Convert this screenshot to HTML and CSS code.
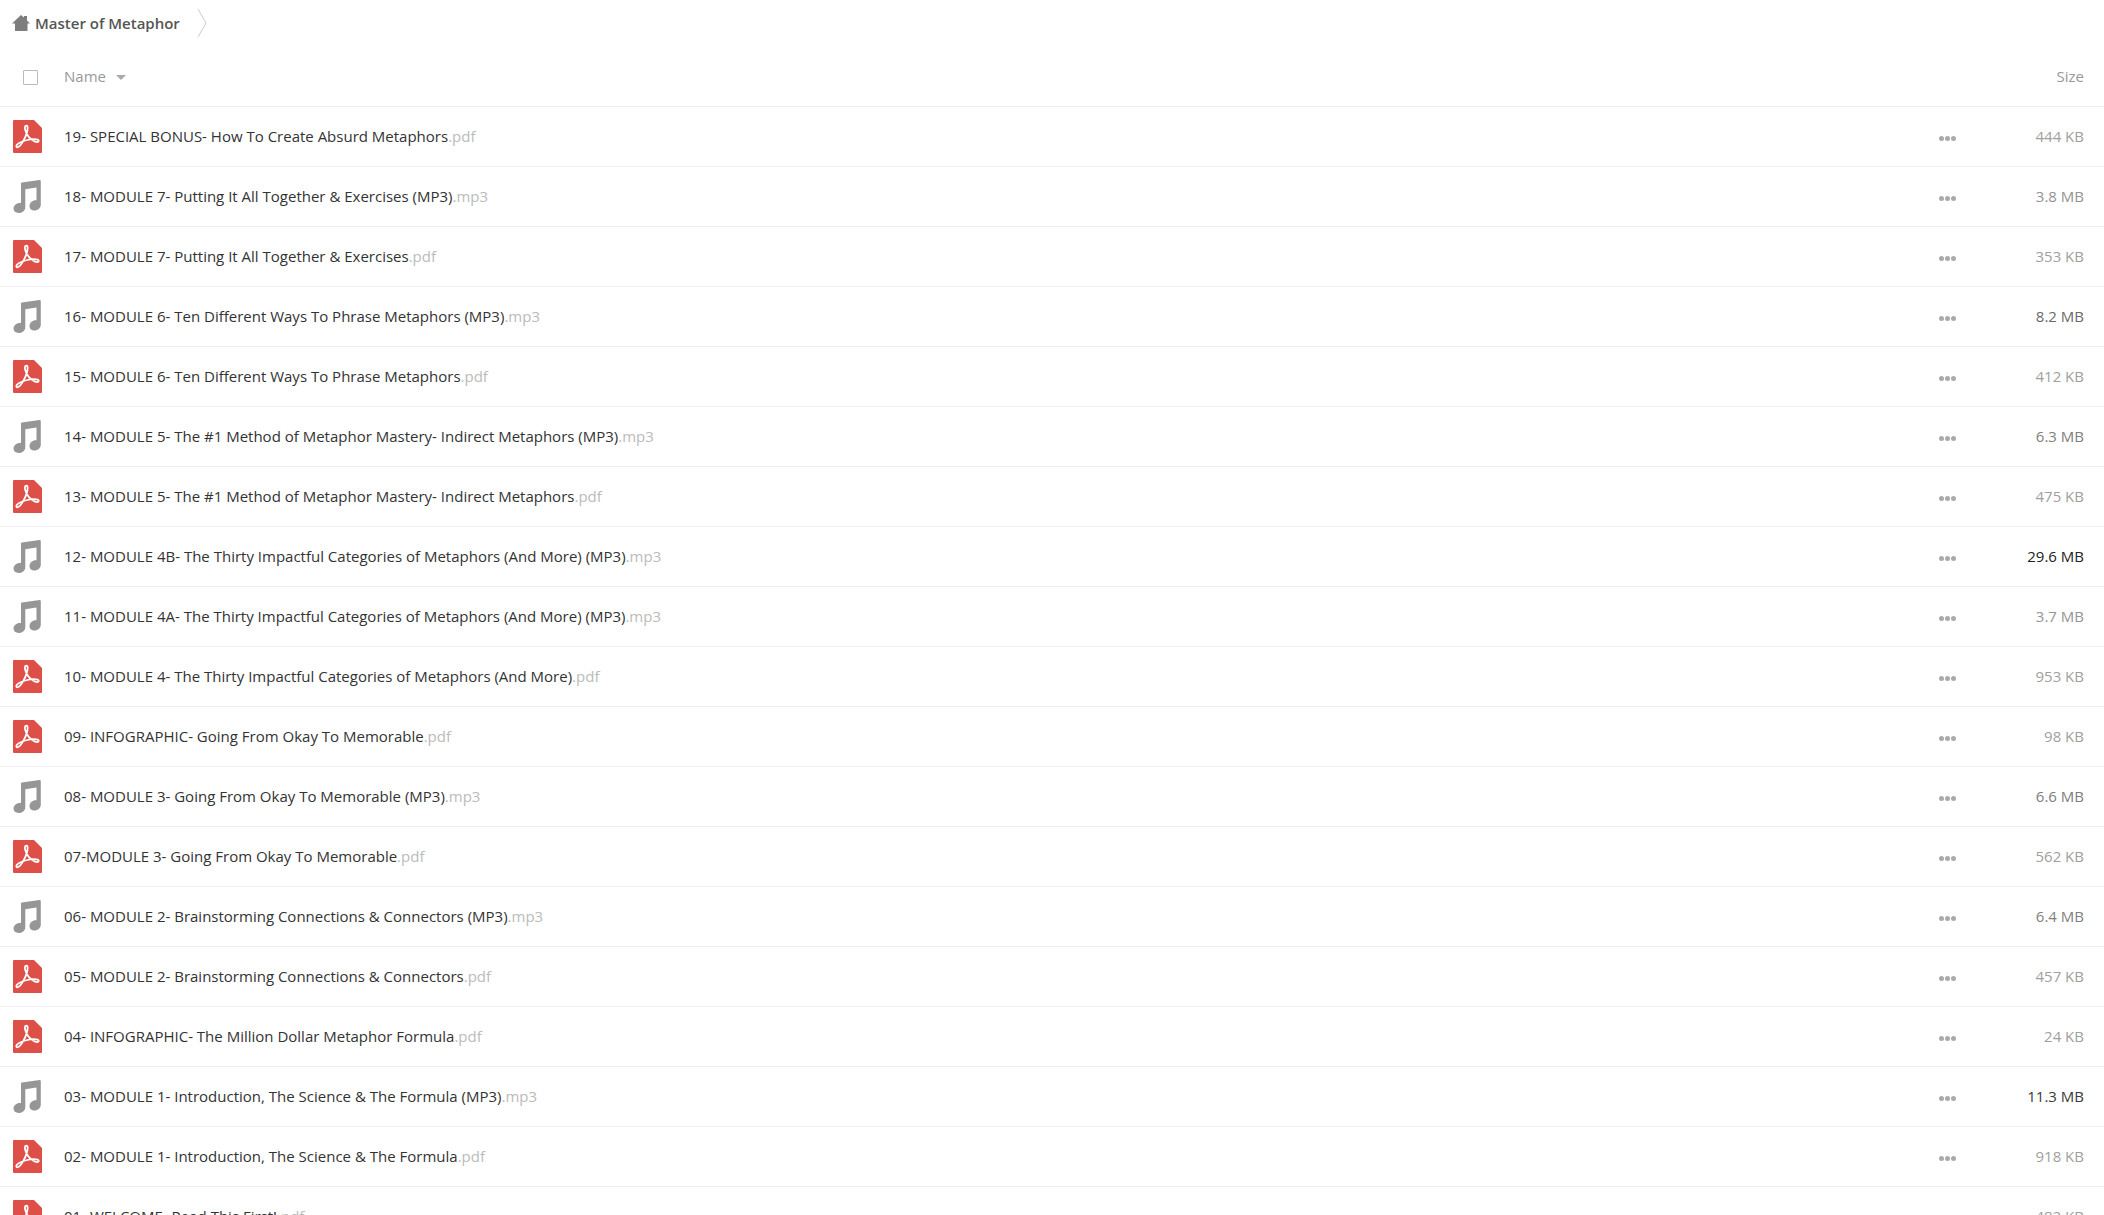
FILE: index.html
```html
<!DOCTYPE html>
<html lang="en">
<head>
    <meta charset="UTF-8">
    <meta name="viewport" content="width=device-width, initial-scale=1.0">
    <title>Master of Metaphor</title>
    <link rel="stylesheet" href="styles.css">
</head>
<body>
    <svg class="sprite" aria-hidden="true">
        <symbol id="icon-pdf" viewBox="0 0 29 33">
            <path fill="#dd4f47" d="M1 0H21L29 8V32a1 1 0 0 1-1 1H1a1 1 0 0 1-1-1V1a1 1 0 0 1 1-1z"/>
            <path fill="none" stroke="#fff" stroke-width="1.8" stroke-linejoin="round" d="M13.400 5.600c-1.900 0-1.700 2.600-1.100 4.600 1.100 3.900 4.300 8.100 7.700 10.300 1.600 1.100 3.500 1.800 4.800 1.400 1.300-.4 1.200-1.900-.2-2.300-2.800-.7-8.300-.1-12.200.9-3.300.9-6.500 2.200-8.200 4-1.300 1.300-1.100 2.800.2 2.800 2 0 4.600-3.800 6.700-7.900 1.800-3.500 3.400-8.500 3.500-11 .1-1.700-.2-2.800-1.200-2.800z"/>
        </symbol>
        <symbol id="icon-audio" viewBox="0 0 28 33">
            <path fill="#969696" d="M7.500 3.500Q7.500 2.600 8.500 2.500L26 0Q27.300 0 27.300 1.200V24.500C27.300 28 24.500 30.500 20.800 30.500C17.800 30.500 16 28.900 16 26.300C16 22.500 19.500 19.800 23 20.300V7.500L11.800 9.200V27C11.800 30.500 9 33 5.200 33C2 33 0 31.300 0 28.600C0 25 3.500 22.400 7.500 23z"/>
        </symbol>
    </svg>

    <nav class="breadcrumb">
        <a class="crumb" href="#">
            <svg class="home" viewBox="0 0 18 16" aria-hidden="true">
                <path fill="#7d7d7d" d="M9 0L12 2.600V1H15V5.400L18 8.500H15.500V16H3V8.500H0z"/>
            </svg>
            Master of Metaphor
        </a>
        <svg class="divider" viewBox="0 0 10 28" aria-hidden="true">
            <path fill="none" stroke="#ccc" d="M1 0L9 14L1 28"/>
        </svg>
    </nav>

    <table class="files">
        <thead>
            <tr>
                <th class="select"><input type="checkbox" class="select-all" aria-label="Select all"></th>
                <th class="name"><button type="button" class="sort">Name <span class="arrow"></span></button></th>
                <th class="actions"></th>
                <th class="size"><button type="button" class="sort">Size</button></th>
            </tr>
        </thead>
        <tbody id="fileList"></tbody>
    </table>

    <script src="script.js"></script>
</body>
</html>
```
FILE: styles.css
```css
* {
    box-sizing: border-box;
}

body {
    margin: 0;
    background-color: #fff;
    color: #333;
    font-family: "Open Sans", sans-serif;
    font-size: 15px;
    line-height: 20px;
}

a {
    color: inherit;
    text-decoration: none;
}

button {
    padding: 0;
    border: none;
    background: none;
    color: inherit;
    font: inherit;
    cursor: pointer;
}

.sprite {
    display: none;
}

.breadcrumb {
    display: flex;
    align-items: center;
    gap: 17px;
    height: 45px;
    padding-left: 12px;
}

.crumb {
    display: flex;
    align-items: center;
    gap: 5px;
    color: #555;
    font-weight: 600;
}

.home {
    width: 18px;
    height: 16px;
}

.divider {
    width: 10px;
    height: 28px;
}

.files {
    width: 100%;
    border-collapse: separate;
    border-spacing: 0;
    table-layout: fixed;
}

th,
td {
    height: 60px;
    padding: 0 0 2px;
    border-bottom: 1px solid #eee;
    text-align: left;
    vertical-align: middle;
}

th {
    height: 62px;
    padding-bottom: 0;
    color: #999;
    font-weight: 400;
}

.select {
    width: 64px;
    padding: 0 0 0 13px;
}

th.select {
    padding-left: 23px;
}

.select-all {
    display: block;
    width: 15px;
    height: 15px;
    margin: 3px 0 0;
    border: 1px solid #bbb;
    border-radius: 1px;
    appearance: none;
}

.select-all:checked {
    background-color: #999;
}

.arrow {
    display: inline-block;
    margin-left: 6px;
    border: 5px solid transparent;
    border-top-color: #aaa;
    border-bottom: none;
    vertical-align: middle;
}

.file-icon {
    display: block;
    width: 29px;
    height: 33px;
}

.ext {
    color: #bbb;
}

.actions {
    width: 81px;
}

.more {
    display: flex;
    gap: 1px;
    padding-top: 6px;
}

.dot {
    width: 5px;
    height: 5px;
    border-radius: 50%;
    background-color: #aaa;
}

th.size,
td.size {
    width: 84px;
    padding-right: 20px;
    text-align: right;
    white-space: nowrap;
}
```
FILE: script.js
```js
const files = [
    ['19- SPECIAL BONUS- How To Create Absurd Metaphors', 'pdf', '444 KB'],
    ['18- MODULE 7- Putting It All Together & Exercises (MP3)', 'mp3', '3.8 MB'],
    ['17- MODULE 7- Putting It All Together & Exercises', 'pdf', '353 KB'],
    ['16- MODULE 6- Ten Different Ways To Phrase Metaphors (MP3)', 'mp3', '8.2 MB'],
    ['15- MODULE 6- Ten Different Ways To Phrase Metaphors', 'pdf', '412 KB'],
    ['14- MODULE 5- The #1 Method of Metaphor Mastery- Indirect Metaphors (MP3)', 'mp3', '6.3 MB'],
    ['13- MODULE 5- The #1 Method of Metaphor Mastery- Indirect Metaphors', 'pdf', '475 KB'],
    ['12- MODULE 4B- The Thirty Impactful Categories of Metaphors (And More) (MP3)', 'mp3', '29.6 MB'],
    ['11- MODULE 4A- The Thirty Impactful Categories of Metaphors (And More) (MP3)', 'mp3', '3.7 MB'],
    ['10- MODULE 4- The Thirty Impactful Categories of Metaphors (And More)', 'pdf', '953 KB'],
    ['09- INFOGRAPHIC- Going From Okay To Memorable', 'pdf', '98 KB'],
    ['08- MODULE 3- Going From Okay To Memorable (MP3)', 'mp3', '6.6 MB'],
    ['07-MODULE 3- Going From Okay To Memorable', 'pdf', '562 KB'],
    ['06- MODULE 2- Brainstorming Connections & Connectors (MP3)', 'mp3', '6.4 MB'],
    ['05- MODULE 2- Brainstorming Connections & Connectors', 'pdf', '457 KB'],
    ['04- INFOGRAPHIC- The Million Dollar Metaphor Formula', 'pdf', '24 KB'],
    ['03- MODULE 1- Introduction, The Science & The Formula (MP3)', 'mp3', '11.3 MB'],
    ['02- MODULE 1- Introduction, The Science & The Formula', 'pdf', '918 KB'],
    ['01- WELCOME- Read This First!', 'pdf', '482 KB']
];

// bigger files get a darker size label
function sizeColor(size) {
    const mb = size.endsWith('MB') ? parseFloat(size) : parseFloat(size) / 1024;
    const grey = Math.max(34, Math.round(160 - mb * mb * 0.8));
    return `rgb(${grey}, ${grey}, ${grey})`;
}

document.getElementById('fileList').innerHTML = files.map(([name, ext, size]) => `
    <tr>
        <td class="select"><svg class="file-icon" aria-hidden="true"><use href="#icon-${ext === 'pdf' ? 'pdf' : 'audio'}"/></svg></td>
        <td class="name"><a href="#">${name.replace('&', '&amp;')}<span class="ext">.${ext}</span></a></td>
        <td class="actions"><button type="button" class="more" aria-label="More actions"><span class="dot"></span><span class="dot"></span><span class="dot"></span></button></td>
        <td class="size" style="color: ${sizeColor(size)}">${size}</td>
    </tr>`).join('');
```
